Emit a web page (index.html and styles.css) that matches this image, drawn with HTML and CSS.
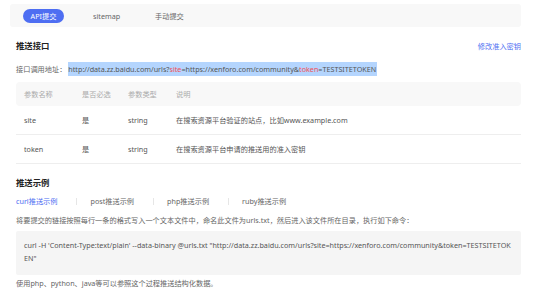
FILE: index.html
```html
<!DOCTYPE html>
<html lang="zh-CN">
<head>
<meta charset="utf-8">
<title>普通收录</title>
<link rel="stylesheet" href="styles.css">
</head>
<body>
<div class="page">
  <nav class="tabbar">
    <span class="tab active">API提交</span>
    <span class="tab">sitemap</span>
    <span class="tab">手动提交</span>
  </nav>

  <div class="section-head">
    <h2 class="title">推送接口</h2>
    <a class="link">修改准入密钥</a>
  </div>
  <p class="api-line">接口调用地址：<span class="sel">http://data.zz.baidu.com/urls?<em>site</em>=https://xenforo.com/community&amp;<em>token</em>=TESTSITETOKEN</span></p>

  <div class="table">
    <div class="row head">
      <span class="c1">参数名称</span><span class="c2">是否必选</span><span class="c3">参数类型</span><span class="c4">说明</span>
    </div>
    <div class="row">
      <span class="c1">site</span><span class="c2">是</span><span class="c3">string</span><span class="c4">在搜索资源平台验证的站点，比如www.example.com</span>
    </div>
    <div class="row">
      <span class="c1">token</span><span class="c2">是</span><span class="c3">string</span><span class="c4">在搜索资源平台申请的推送用的准入密钥</span>
    </div>
  </div>

  <h2 class="title title2">推送示例</h2>
  <div class="subtabs">
    <span class="st on">curl推送示例</span><span class="sep"></span>
    <span class="st">post推送示例</span><span class="sep"></span>
    <span class="st">php推送示例</span><span class="sep"></span>
    <span class="st">ruby推送示例</span>
  </div>
  <p class="desc">将要提交的链接按照每行一条的格式写入一个文本文件中，命名此文件为urls.txt，然后进入该文件所在目录，执行如下命令：</p>
  <div class="code">curl -H 'Content-Type:text/plain' --data-binary @urls.txt "http://data.zz.baidu.com/urls?site=https://xenforo.com/community&amp;token=TESTSITETOKEN"</div>
  <p class="desc foot">使用php、python、java等可以参照这个过程推送结构化数据。</p>
</div>
</body>
</html>
```

FILE: styles.css
```css
* { box-sizing: border-box; }
html, body { margin: 0; padding: 0; background: #fff; }
body {
  font-family: "Noto Sans", "Noto Sans CJK SC", sans-serif;
  font-size: 7.2px;
  color: #666;
}
.page {
  width: 533px;
  padding: 4px 12px 0 16px;
}
.tabbar {
  margin-left: -6px;
  height: 23px;
  background: #f8f8f8;
  border-radius: 3px;
  display: flex;
  align-items: center;
  padding-left: 13px;
}
.tab {
  height: 14px;
  line-height: 14px;
  color: #666;
  border-radius: 7px;
}
.tab.active {
  background: #4e6ef2;
  color: #fff;
  width: 41px;
  text-align: center;
  margin-right: 29px;
}
.tab:nth-child(2) { width: 62px; }
.section-head {
  display: flex;
  justify-content: space-between;
  align-items: center;
  margin-top: 14px;
  height: 10px;
}
.title {
  margin: 0;
  font-size: 8.4px;
  font-weight: bold;
  color: #222;
  line-height: 10px;
}
.link {
  color: #4e6ef2;
}
.api-line {
  margin: 11px 0 0;
  height: 14px;
  display: flex;
  align-items: center;
}
.sel {
  margin-left: 2px;
  background: #b4d5fe;
  color: #555;
  line-height: 14px;
  padding-right: 1px;
}
.sel em { font-style: normal; color: #f0505a; }
.table { margin-top: 6px; }
.row {
  display: flex;
  align-items: center;
  height: 29px;
  border-bottom: 1px solid #eeeeee;
  color: #555;
}
.row.head {
  height: 24px;
  background: #f8f8f8;
  border-bottom: none;
  border-radius: 4px;
  color: #aaa;
}
.row span { display: block; }
.c1 { width: 66px; padding-left: 8px; }
.c2 { width: 46px; }
.c3 { width: 48px; }
.c4 { flex: 1; }
.title2 { margin-top: 14px; }
.subtabs {
  display: flex;
  align-items: center;
  margin-top: 8px;
  height: 10px;
  color: #666;
}
.st { line-height: 10px; }
.st.on { color: #4e6ef2; }
.sep {
  width: 1px;
  height: 7px;
  background: #e6e6e6;
  margin: 0 13px 0 19px;
}
.desc {
  margin: 9px 0 0;
  line-height: 10px;
  color: #666;
}
.code {
  margin-top: 6px;
  background: #f5f5f5;
  padding: 8px 10px 10px 8px;
  line-height: 13px;
  color: #555;
  word-break: break-all;
  border-radius: 2px;
  height: 44px;
}
.foot { margin-top: 3px; }
```
